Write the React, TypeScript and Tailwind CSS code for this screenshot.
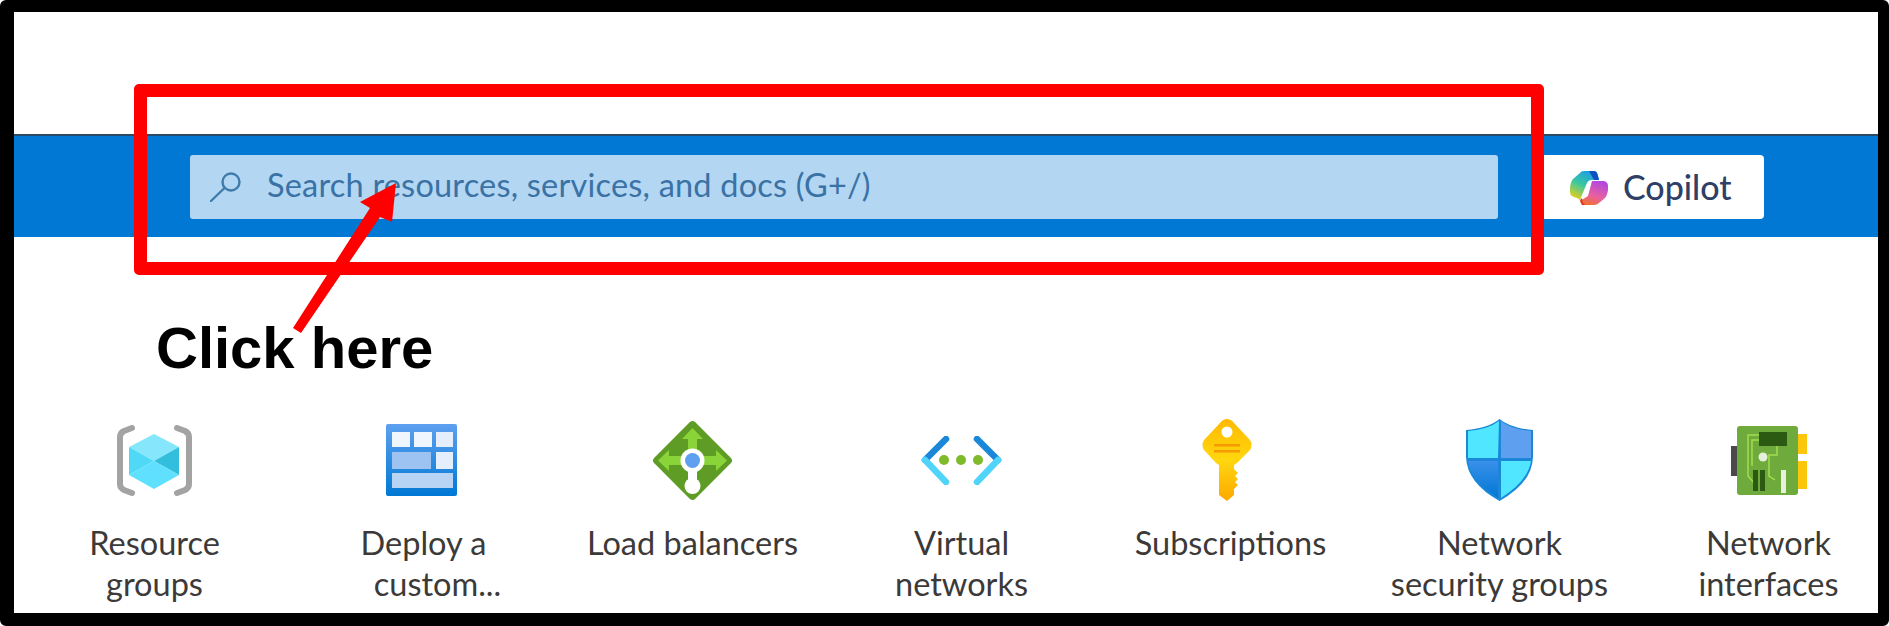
import { ReactNode } from "react";

const ResourceGroupsIcon = () => (
  <svg width="75" height="71" viewBox="0 0 75 71">
    <path d="M15 3 L7 6 Q3 8 3 12 V59 Q3 63 7 65 L15 68" fill="none" stroke="#a3a3a3" strokeWidth="6" strokeLinecap="round" />
    <path d="M60 3 L68 6 Q72 8 72 12 V59 Q72 63 68 65 L60 68" fill="none" stroke="#a3a3a3" strokeWidth="6" strokeLinecap="round" />
    <path d="M37 9 L62 22 L37 36 L12 22 Z" fill="#86e6fc" />
    <path d="M12 22 L37 36 L12 50 Z" fill="#50d9f7" />
    <path d="M62 22 V50 L37 36 Z" fill="#32bedd" />
    <path d="M12 50 L37 36 L62 50 L37 64 Z" fill="#5fe0fe" />
  </svg>
);

const DeployIcon = () => (
  <svg width="71" height="73" viewBox="0 0 71 73">
    <defs>
      <linearGradient id="deployBg" x1="0" y1="0" x2="0" y2="1">
        <stop offset="0" stopColor="#5ea0ef" />
        <stop offset="1" stopColor="#0078d4" />
      </linearGradient>
    </defs>
    <rect width="71" height="72" rx="2" fill="url(#deployBg)" />
    <rect x="6" y="8" width="18" height="15" fill="#f0f6fd" />
    <rect x="28" y="8" width="18" height="15" fill="#f0f6fd" />
    <rect x="50" y="8" width="17" height="15" fill="#e4effb" />
    <rect x="6" y="28" width="39" height="17" fill="#9cc3f2" />
    <rect x="50" y="28" width="17" height="17" fill="#e4effb" />
    <rect x="6" y="49" width="61" height="15" fill="#b7d4f5" />
  </svg>
);

const LoadBalancerIcon = () => (
  <svg width="81" height="81" viewBox="0 0 81 81">
    <rect x="11.5" y="11.5" width="58" height="58" rx="4" transform="rotate(45 40.5 40.5)" fill="#5e9c26" />
    <path d="M40.5 8 L51 19 H45 V32 H36 V19 H30 Z" fill="#8ad43a" />
    <path d="M6 40.5 L17 30 V36 H30 V45 H17 V51 Z" fill="#8ad43a" />
    <path d="M75 40.5 L64 30 V36 H51 V45 H64 V51 Z" fill="#8ad43a" />
    <rect x="36" y="44" width="9" height="18" fill="#fff" />
    <circle cx="40.5" cy="40.5" r="12" fill="#fff" />
    <circle cx="40.5" cy="40.5" r="7.5" fill="#5ea0ef" />
    <circle cx="40.5" cy="66" r="8" fill="#fff" />
  </svg>
);

const VirtualNetworkIcon = () => (
  <svg width="81" height="49" viewBox="0 0 81 49">
    <path d="M25 3 L4 24" stroke="#1b87d9" strokeWidth="6.5" strokeLinecap="round" />
    <path d="M4 24 L25 46" stroke="#50d4f9" strokeWidth="6.5" strokeLinecap="round" />
    <path d="M56 3 L77 24" stroke="#1b87d9" strokeWidth="6.5" strokeLinecap="round" />
    <path d="M77 24 L56 46" stroke="#50d4f9" strokeWidth="6.5" strokeLinecap="round" />
    <circle cx="23" cy="24" r="5" fill="#7fba2b" />
    <circle cx="40" cy="24" r="5" fill="#7fba2b" />
    <circle cx="57" cy="24" r="5" fill="#7fba2b" />
  </svg>
);

const KeyIcon = () => (
  <svg className="-ml-[8px]" width="52" height="82" viewBox="0 0 52 82">
    <defs>
      <linearGradient id="keyBg" x1="0" y1="0" x2="0" y2="1">
        <stop offset="0" stopColor="#ffb900" />
        <stop offset="0.5" stopColor="#ffd70f" />
        <stop offset="1" stopColor="#fca800" />
      </linearGradient>
    </defs>
    <path d="M26 0 Q30 0 33 4 L49 21 Q52 26 49 31 L36 44 L33 46 V76 L26 82 L18 76 V46 L15 44 L3 31 Q0 26 3 21 L19 4 Q22 0 26 0 Z M33 50 L37 54 L34 57 L37 60 L34 63 L37 66 L33 70 Z" fill="url(#keyBg)" />
    <circle cx="26" cy="13" r="5.5" fill="#fff" />
    <rect x="13" y="25" width="26" height="2.5" fill="#f59a00" />
    <rect x="13" y="31" width="26" height="2.5" fill="#f59a00" />
  </svg>
);

const ShieldIcon = () => (
  <svg width="67" height="82" viewBox="0 0 67 82">
    <defs>
      <linearGradient id="shieldLow" x1="0" y1="0" x2="0" y2="1">
        <stop offset="0" stopColor="#3a90ea" />
        <stop offset="1" stopColor="#0078d4" />
      </linearGradient>
    </defs>
    <path d="M33.5 0 Q44 9 67 11 V38 Q66 64 33.5 82 Q1 64 0 38 V11 Q23 9 33.5 0 Z" fill="#1b87d9" />
    <path d="M33 2 Q23 10 2 12 V39 H32 Z" fill="#50e6ff" />
    <path d="M35 2 Q44 10 65 12 V39 H35 Z" fill="#5ea0ef" />
    <path d="M2 42 H32 V79 Q5 62 2 42 Z" fill="url(#shieldLow)" />
    <path d="M35 42 H65 Q62 62 35 79 Z" fill="#50e6ff" />
  </svg>
);

const NetworkInterfaceIcon = () => (
  <svg width="76" height="69" viewBox="0 0 76 69">
    <rect y="20" width="8" height="30" fill="#4a4a4a" />
    <rect x="66" y="8" width="10" height="20" fill="#fcc70a" />
    <rect x="66" y="35" width="10" height="28" fill="#fcc70a" />
    <rect x="6" y="0" width="61" height="69" rx="3" fill="#6eaa3c" />
    <rect x="28" y="6" width="28" height="14" fill="#2c5a12" />
    <path d="M28 9 H17 V50 L24 58" fill="none" stroke="#a4dc4c" strokeWidth="1.5" />
    <path d="M28 14 H21 V40" fill="none" stroke="#a4dc4c" strokeWidth="1.5" />
    <path d="M46 20 V29 H38 V50 L44 54" fill="none" stroke="#a4dc4c" strokeWidth="1.5" />
    <circle cx="32" cy="31" r="4.5" fill="#e4f0d8" />
    <rect x="22" y="44" width="5" height="21" fill="#2c5a12" />
    <rect x="29" y="44" width="5" height="21" fill="#2c5a12" />
    <rect x="50" y="44" width="5" height="23" fill="#e6f0dc" />
  </svg>
);

const CopilotIcon = () => (
  <svg width="38" height="35" viewBox="0 0 38 35">
    <defs>
      <linearGradient id="copilotLeft" x1="0.7" y1="0" x2="0.2" y2="1">
        <stop offset="0" stopColor="#1a9be8" />
        <stop offset="0.5" stopColor="#3cc8a0" />
        <stop offset="1" stopColor="#f0d010" />
      </linearGradient>
      <linearGradient id="copilotRight" x1="0.7" y1="0" x2="0.3" y2="1">
        <stop offset="0" stopColor="#b048e0" />
        <stop offset="0.6" stopColor="#e860a0" />
        <stop offset="1" stopColor="#f07030" />
      </linearGradient>
    </defs>
    <path d="M10 3 Q11 1 14 1 H24 Q27 1 28 6 L29 10 H22 Q18 10 16.5 14 L10 30 Q8 28 4 27 Q0 26 0 22 V17 Q1 11 3 9 Z" fill="url(#copilotLeft)" />
    <path d="M19 1 H24 Q27 1 28 6 L29 10 H24 Z" fill="#1050c0" />
    <path d="M22 11 H34 Q38 12 38 16 V20 Q37 26 35 28 L29 33 Q27 35 24 35 H14 Q11 35 10 31 L18 26 Z" fill="url(#copilotRight)" />
    <path d="M10 30 L12 35 H16 Q12 34 12 28 Z" fill="#d83a20" />
  </svg>
);

const services: { icon: ReactNode; lines: string[]; iconClass?: string }[] = [
  { icon: <ResourceGroupsIcon />, lines: ["Resource", "groups"] },
  { icon: <DeployIcon />, lines: ["Deploy a", "custom..."], iconClass: "-ml-[4px]" },
  { icon: <LoadBalancerIcon />, lines: ["Load balancers"] },
  { icon: <VirtualNetworkIcon />, lines: ["Virtual", "networks"] },
  { icon: <KeyIcon />, lines: ["Subscriptions"] },
  { icon: <ShieldIcon />, lines: ["Network", "security groups"] },
  { icon: <NetworkInterfaceIcon />, lines: ["Network", "interfaces"] },
];

export default function App() {
  return (
    <div className="relative h-[626px] w-[1889px] overflow-hidden bg-white font-['Lato',sans-serif]">
      <div className="flex h-full flex-col rounded-[6px] border-t-[12px] border-r-[11px] border-b-[13px] border-l-[14px] border-black bg-white">
        <div className="h-[122px] shrink-0" />

        {/* Portal header */}
        <div className="flex h-[103px] shrink-0 items-start gap-[40px] border-t-2 border-[#2b4a66] bg-[#0078d4] pt-[19px] pl-[176px]">
          <div className="flex h-[64px] w-[1308px] items-center rounded-[3px] bg-[#b3d6f2] pl-[20px]">
            <svg width="32" height="30" viewBox="0 0 32 30" fill="none" stroke="#3f7cab" strokeWidth="2.4">
              <circle cx="21" cy="10" r="8.5" />
              <path d="M14.5 16 L1 29" strokeLinecap="round" />
            </svg>
            <span className="mb-[3px] ml-[25px] text-[32.5px] leading-none tracking-[0.2px] text-[#3a72a6]">
              Search resources, services, and docs (G+/)
            </span>
          </div>
          <div className="flex h-[64px] w-[226px] items-center rounded-[4px] bg-white pl-[32px]">
            <CopilotIcon />
            <span className="ml-[15px] text-[34px] leading-none font-medium text-[#2f3f66]">Copilot</span>
          </div>
        </div>

        <div className="pt-[79px] pl-[142px] font-['Liberation_Sans',sans-serif] text-[58px] leading-[64px] font-bold text-black">
          Click here
        </div>

        {/* Service shortcuts */}
        <div className="mt-[39px] flex pl-[6px]">
          {services.map((s) => (
            <div key={s.lines[0] + s.lines[1]} className="flex w-[269px] shrink-0 flex-col items-center">
              <div className={`flex h-[82px] items-center ${s.iconClass ?? ""}`}>{s.icon}</div>
              <div className="mt-[21px] text-center text-[32.5px] leading-[41px] whitespace-nowrap text-[#3b3a39]">
                {s.lines.map((line) => (
                  <div key={line} className={line === "custom..." ? "pl-[28px]" : ""}>
                    {line}
                  </div>
                ))}
              </div>
            </div>
          ))}
        </div>
      </div>

      {/* Annotation */}
      <div className="absolute top-[84px] left-[134px] h-[191px] w-[1410px] rounded-[5px] border-[13px] border-[#ff0000]" />
      <svg className="absolute top-0 left-0" width="1889" height="626">
        <polygon points="396,183 392,222 380,217 301,333 293,328 370,208 360,202" fill="#ff0000" />
      </svg>
    </div>
  );
}
